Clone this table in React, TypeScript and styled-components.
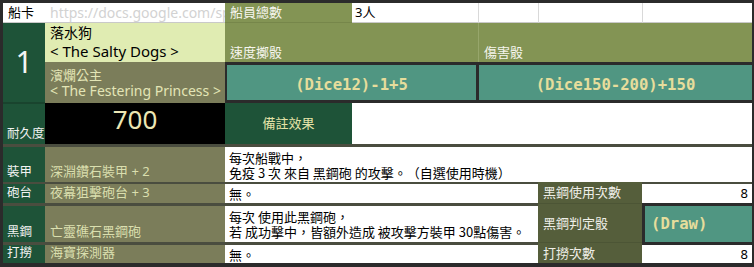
import React from "react";
import styled, { createGlobalStyle } from "styled-components";

const SANS = `"Noto Sans", "Noto Sans CJK TC", sans-serif`;
const CJK = `"Noto Sans CJK TC", "Noto Sans", sans-serif`;
const MONO = `"DejaVu Sans Mono", "Liberation Mono", monospace`;

const LINE = "#4a4d3f";
const EDGE = "#2b2b2b";

const GlobalStyle = createGlobalStyle`
  html, body { margin: 0; padding: 0; background: ${EDGE}; }
  body { font-family: ${SANS}; text-spacing-trim: space-all; }
`;

const Sheet = styled.div`
  display: grid;
  grid-template-columns: 42px 180px 127px 126px 60px 104px 110px;
  grid-template-rows: 20px 39px 41px 41px 38px 21px 39px 21px;
  width: 754px;
  box-sizing: border-box;
  padding: 3px 2px 4px 3px;
  background: ${EDGE};
`;

interface Place {
  $col: string;
  $row: string;
  $top?: number;
  $topColor?: string;
}

const Cell = styled.div<Place>`
  grid-column: ${(p) => p.$col};
  grid-row: ${(p) => p.$row};
  box-sizing: border-box;
  min-width: 0;
  overflow: hidden;
  display: flex;
  font-family: ${SANS};
  font-size: 13px;
  line-height: 17px;
  white-space: nowrap;
  text-spacing-trim: space-all;
  border-top: ${(p) => p.$top ?? 0}px solid ${(p) => p.$topColor ?? LINE};
`;

/* ---- header row ---- */
const HeadLabel = styled(Cell)`
  background: #ffffff;
  color: #000;
  align-items: center;
  padding-left: 5px;
  border-bottom: 1px solid #c9c9c9;
`;

const LinkCell = styled(Cell)`
  background: #ffffff;
  color: #d2d2d2;
  align-items: center;
  padding-left: 5px;
  font-size: 14px;
  border-bottom: 1px solid #c9c9c9;
`;

const OliveHead = styled(Cell)`
  background: #839454;
  color: #f6f6ee;
  align-items: center;
  padding-left: 5px;
  border-bottom: 1px solid #76864a;
`;

const HeadValue = styled(Cell)<{ $divider?: boolean }>`
  background: #ffffff;
  color: #000;
  align-items: center;
  padding-left: 3px;
  border-left: ${(p) => (p.$divider ? "1px solid #d9d9d9" : "0")};
  border-bottom: 1px solid #c9c9c9;
`;

/* ---- ship identity ---- */
const ShipNumber = styled(Cell)`
  background: #1e5338;
  color: #f4f4f4;
  align-items: center;
  justify-content: center;
  font-size: 30px;
  line-height: 30px;
  padding-bottom: 1px;
  border-bottom: 1px solid #19442e;
`;

const ShipName = styled(Cell)`
  background: #e0ecb2;
  color: #000;
  flex-direction: column;
  padding-left: 5px;
  line-height: 19px;
  font-size: 14px;
`;

const NameLatin = styled.span`
  font-size: 15px;
`;

const Captain = styled(Cell)`
  background: #7b7d5a;
  color: #e3e5b6;
  flex-direction: column;
  padding: 5px 0 0 5px;
  line-height: 16px;
  font-size: 13px;
`;

const CaptainLatin = styled.span`
  font-size: 14px;
`;

/* ---- dice ---- */
const DiceHeading = styled(Cell)<{ $divider?: boolean }>`
  background: #839454;
  color: #f6f6ee;
  align-items: flex-end;
  padding: 0 0 1px 5px;
  border-left: ${(p) => (p.$divider ? "1px solid #97a66b" : "0")};
`;

const DiceBox = styled(Cell)<{ $left: number; $right: number }>`
  background: #509682;
  color: #e6dd9c;
  align-items: center;
  justify-content: center;
  padding-top: 6px;
  font-family: ${MONO};
  font-weight: bold;
  font-size: 15.6px;
  border: 3px solid ${EDGE};
  border-left-width: ${(p) => p.$left}px;
  border-right-width: ${(p) => p.$right}px;
`;

/* ---- stats & gear ---- */
const StatLabel = styled(Cell)`
  background: #1e5338;
  color: #f2f2f2;
  align-items: flex-end;
  padding: 0 0 2px 4px;
  font-size: 12.5px;
`;

const Durability = styled(Cell)`
  background: #000;
  color: #ece6b4;
  align-items: center;
  justify-content: center;
  font-size: 26px;
  line-height: 26px;
  padding-bottom: 9px;
`;

const NoteTitle = styled(Cell)`
  background: #1e5338;
  color: #e4e3a8;
  align-items: center;
  justify-content: center;
`;

const Blank = styled(Cell)`
  background: #ffffff;
`;

const Gear = styled(Cell)`
  background: #7b7d5a;
  color: #dadfae;
  align-items: flex-end;
  padding: 0 0 2px 5px;
`;

const Note = styled(Cell)`
  background: #ffffff;
  color: #000;
  flex-direction: column;
  justify-content: center;
  padding-left: 4px;
  line-height: 15px;
  font-family: ${CJK};
`;

const CountLabel = styled(Cell)`
  background: #555e3b;
  color: #efefe8;
  align-items: center;
  padding-left: 5px;
`;

const CountValue = styled(Cell)`
  background: #ffffff;
  color: #000;
  align-items: center;
  justify-content: flex-end;
  padding-right: 4px;
`;

const DrawBox = styled(Cell)`
  background: #509682;
  color: #e6dd9c;
  align-items: center;
  padding-left: 6px;
  font-family: ${MONO};
  font-weight: bold;
  font-size: 15.6px;
  border-left: 3px solid ${EDGE};
`;

export default function App() {
  return (
    <>
      <GlobalStyle />
      <Sheet>
        {/* header */}
        <HeadLabel $col="1" $row="1">船卡</HeadLabel>
        <LinkCell $col="2" $row="1">https://docs.google.com/sp</LinkCell>
        <OliveHead $col="3" $row="1">船員總數</OliveHead>
        <HeadValue $col="4" $row="1">3人</HeadValue>
        <HeadValue $col="5" $row="1" $divider />
        <HeadValue $col="6" $row="1" $divider />
        <HeadValue $col="7" $row="1" $divider />

        {/* ship identity and dice */}
        <ShipNumber $col="1" $row="2 / 4">1</ShipNumber>
        <ShipName $col="2" $row="2">
          <span>落水狗</span>
          <NameLatin>&lt; The Salty Dogs &gt;</NameLatin>
        </ShipName>
        <DiceHeading $col="3 / 5" $row="2">速度擲骰</DiceHeading>
        <DiceHeading $col="5 / 8" $row="2" $divider>傷害骰</DiceHeading>

        <Captain $col="2" $row="3">
          <span>濱爛公主</span>
          <CaptainLatin>&lt; The Festering Princess &gt;</CaptainLatin>
        </Captain>
        <DiceBox $col="3 / 5" $row="3" $left={2} $right={2}>(Dice12)-1+5</DiceBox>
        <DiceBox $col="5 / 8" $row="3" $left={1} $right={0}>(Dice150-200)+150</DiceBox>

        {/* durability */}
        <StatLabel $col="1" $row="4" $top={1} $topColor="#19442e">耐久度</StatLabel>
        <Durability $col="2" $row="4">700</Durability>
        <NoteTitle $col="3" $row="4">備註效果</NoteTitle>
        <Blank $col="4 / 8" $row="4" />

        {/* armour */}
        <StatLabel $col="1" $row="5" $top={3}>裝甲</StatLabel>
        <Gear $col="2" $row="5" $top={3}>深淵鑽石裝甲 + 2</Gear>
        <Note $col="3 / 8" $row="5" $top={3}>
          <span>每次船戰中，</span>
          <span>免疫 3 次 來自 黑鋼砲 的攻擊。（自選使用時機）</span>
        </Note>

        {/* turret */}
        <StatLabel $col="1" $row="6" $top={2}>砲台</StatLabel>
        <Gear $col="2" $row="6" $top={2}>夜幕狙擊砲台 + 3</Gear>
        <Note $col="3 / 6" $row="6" $top={2}>無。</Note>
        <CountLabel $col="6" $row="6">黑鋼使用次數</CountLabel>
        <CountValue $col="7" $row="6" $top={2}>8</CountValue>

        {/* black steel cannon */}
        <StatLabel $col="1" $row="7" $top={3}>黑鋼</StatLabel>
        <Gear $col="2" $row="7" $top={3}>亡靈礁石黑鋼砲</Gear>
        <Note $col="3 / 6" $row="7" $top={3}>
          <span>每次 使用此黑鋼砲，</span>
          <span>若 成功擊中，皆額外造成 被攻擊方裝甲 30點傷害。</span>
        </Note>
        <CountLabel $col="6" $row="7" $top={1} $topColor="#4c5535">黑鋼判定骰</CountLabel>
        <DrawBox $col="7" $row="7" $top={3} $topColor={EDGE}>(Draw)</DrawBox>

        {/* salvage */}
        <StatLabel $col="1" $row="8" $top={3}>打撈</StatLabel>
        <Gear $col="2" $row="8" $top={3}>海寶探測器</Gear>
        <Note $col="3 / 6" $row="8" $top={3}>無。</Note>
        <CountLabel $col="6" $row="8" $top={1} $topColor="#4c5535">打撈次數</CountLabel>
        <CountValue $col="7" $row="8" $top={3} $topColor={EDGE}>8</CountValue>
      </Sheet>
    </>
  );
}
